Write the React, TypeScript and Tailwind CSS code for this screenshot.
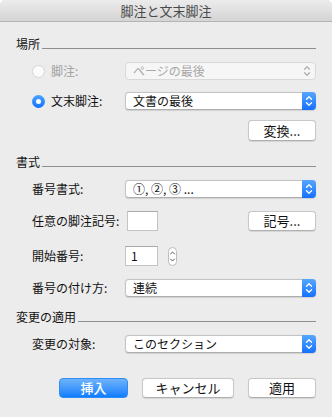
import React from 'react';

const font = { fontFamily: '"Noto Sans CJK JP", "Noto Sans", sans-serif' };

const Chevrons: React.FC<{ color: string }> = ({ color }) => (
    <svg width="14" height="18" viewBox="0 0 14 18" fill="none">
        <path d="M4.5 7.2 L7 4.7 L9.5 7.2" stroke={color} strokeWidth="1.3" strokeLinecap="round" strokeLinejoin="round" />
        <path d="M4.5 10.8 L7 13.3 L9.5 10.8" stroke={color} strokeWidth="1.3" strokeLinecap="round" strokeLinejoin="round" />
    </svg>
);

const Popup: React.FC<{ value: string; disabled?: boolean }> = ({ value, disabled }) =>
    disabled ? (
        <div className="flex-1 h-[18px] flex items-center rounded-[4px] border border-[#d8d8d8] bg-[#f6f6f6] pl-[7px] pr-[1px] text-[12px] text-[#a6a6a6]">
            <span className="flex-1 leading-none">{value}</span>
            <Chevrons color="#b0b0b0" />
        </div>
    ) : (
        <div className="flex-1 h-[18px] flex items-stretch rounded-[4px] border border-[#c4c4c4] border-b-[#aeaeae] bg-white shadow-[0_0.5px_1px_rgba(0,0,0,0.12)] text-[12px] text-[#111]">
            <span className="flex-1 flex items-center pl-[7px] leading-none">{value}</span>
            <div className="w-[14px] -my-px -mr-px rounded-r-[4px] bg-gradient-to-b from-[#54a6ff] to-[#1570fd] flex items-center justify-center">
                <Chevrons color="#ffffff" />
            </div>
        </div>
    );

const Button: React.FC<{ label: string; w: string; primary?: boolean }> = ({ label, w, primary }) => (
    <div
        className={
            primary
                ? `${w} h-[20px] rounded-[4px] bg-gradient-to-b from-[#6cb3fa] to-[#0a7dff] border border-[#2d8cf5] flex items-center justify-center text-[13px] font-medium text-white`
                : `${w} h-[20px] rounded-[4px] bg-white border border-[#c8c8c8] border-b-[#b0b0b0] shadow-[0_0.5px_1px_rgba(0,0,0,0.1)] flex items-center justify-center text-[13px] text-[#111]`
        }
    >
        {label}
    </div>
);

const Header: React.FC<{ label: string; className: string }> = ({ label, className }) => (
    <div className={`${className} h-[16px] flex items-center text-[12px] text-[#111]`}>
        <span className="leading-none pr-[2px]">{label}</span>
        <div className="flex-1 h-px mt-[8px] bg-[#8e8e8e]" />
    </div>
);

const Label: React.FC<{ children: React.ReactNode }> = ({ children }) => (
    <span className="w-[93px] shrink-0 text-[12px] text-[#111] leading-none">{children}</span>
);

export default function App() {
    return (
        <div className="w-[332px] h-[417px] bg-[#ececec] flex flex-col overflow-hidden rounded-t-[5px]" style={font}>
            <div className="h-[22px] shrink-0 bg-gradient-to-b from-[#ececec] to-[#d4d4d4] border-b border-[#b4b4b4] flex items-center justify-center text-[13px] text-[#4a4a4a]">
                脚注と文末脚注
            </div>

            <div className="flex flex-col px-[16px]">
                <Header label="場所" className="mt-[14px]" />

                <div className="mt-[10px] h-[18px] flex items-center pl-[16px]">
                    <div className="w-[93px] shrink-0 flex items-center gap-[6px]">
                        <div className="w-[13px] h-[13px] rounded-full border border-[#d4d4d4] bg-[#fbfbfb]" />
                        <span className="text-[12px] text-[#a3a3a3] leading-none">脚注:</span>
                    </div>
                    <Popup value="ページの最後" disabled />
                </div>

                <div className="mt-[12px] h-[18px] flex items-center pl-[16px]">
                    <div className="w-[93px] shrink-0 flex items-center gap-[6px]">
                        <div className="w-[13px] h-[13px] rounded-full bg-gradient-to-b from-[#4aa2ff] to-[#0c73ff] flex items-center justify-center">
                            <div className="w-[5px] h-[5px] rounded-full bg-white" />
                        </div>
                        <span className="text-[12px] text-[#111] leading-none">文末脚注:</span>
                    </div>
                    <Popup value="文書の最後" />
                </div>

                <div className="mt-[10px] flex justify-end">
                    <Button label="変換..." w="w-[68px] h-[21px]" />
                </div>

                <Header label="書式" className="mt-[13px]" />

                <div className="mt-[10px] h-[18px] flex items-center pl-[16px]">
                    <Label>番号書式:</Label>
                    <Popup value="①, ②, ③ ..." />
                </div>

                <div className="mt-[13px] h-[20px] flex items-center pl-[16px]">
                    <Label>任意の脚注記号:</Label>
                    <div className="ml-[2px] w-[31px] h-[20px] bg-white border border-[#c4c4c4] border-t-[#aaaaaa]" />
                    <div className="flex-1" />
                    <Button label="記号..." w="w-[68px]" />
                </div>

                <div className="mt-[15px] h-[20px] flex items-center pl-[16px]">
                    <Label>開始番号:</Label>
                    <div className="w-[33px] h-[20px] bg-white border border-[#c4c4c4] border-t-[#aaaaaa] flex items-center pl-[5px] text-[12px] text-[#111] leading-none">
                        1
                    </div>
                    <div className="ml-[10px] w-[9px] h-[19px] rounded-full border border-[#bcbcbc] bg-white flex items-center justify-center">
                        <svg width="7" height="15" viewBox="0 0 7 15" fill="none">
                            <path d="M1.5 5 L3.5 3 L5.5 5" stroke="#555" strokeWidth="1" strokeLinecap="round" strokeLinejoin="round" />
                            <path d="M1.5 10 L3.5 12 L5.5 10" stroke="#555" strokeWidth="1" strokeLinecap="round" strokeLinejoin="round" />
                        </svg>
                    </div>
                </div>

                <div className="mt-[13px] h-[18px] flex items-center pl-[16px]">
                    <Label>番号の付け方:</Label>
                    <Popup value="連続" />
                </div>

                <Header label="変更の適用" className="mt-[12px]" />

                <div className="mt-[10px] h-[18px] flex items-center pl-[16px]">
                    <Label>変更の対象:</Label>
                    <Popup value="このセクション" />
                </div>

                <div className="mt-[25px] flex justify-end gap-[14px]">
                    <Button label="挿入" w="w-[69px]" primary />
                    <Button label="キャンセル" w="w-[92px]" />
                    <Button label="適用" w="w-[68px]" />
                </div>
            </div>
        </div>
    );
}
